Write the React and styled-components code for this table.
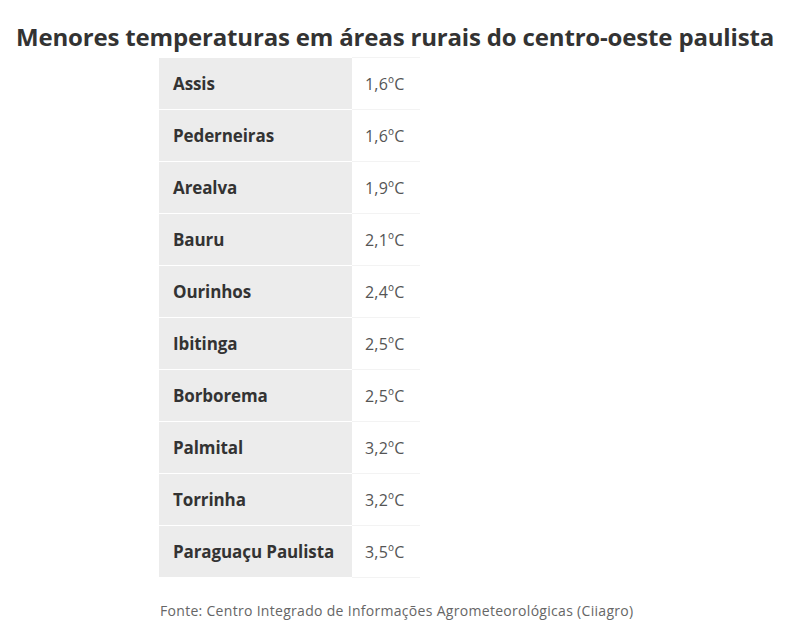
import React from "react";
import styled, { createGlobalStyle } from "styled-components";

const Global = createGlobalStyle`
  html, body { margin: 0; padding: 0; background: #fff; }
  body { font-family: "Open Sans", "Liberation Sans", sans-serif; }
`;

const Page = styled.div`
  width: 800px;
  height: 634px;
  box-sizing: border-box;
  padding-top: 20px;
  display: flex;
  flex-direction: column;
`;

const Title = styled.h2`
  margin: 0;
  text-align: center;
  padding-right: 10px;
  font-family: "Open Sans", sans-serif;
  font-weight: 700;
  font-size: 24px;
  line-height: 34px;
  letter-spacing: -0.17px;
  color: #333;
  white-space: nowrap;
`;

const Table = styled.table`
  margin-left: 159px;
  margin-top: 3px;
  width: 261px;
  table-layout: fixed;
  border-collapse: collapse;
  font-family: "Open Sans", sans-serif;
`;

const Row = styled.tr`
  height: 52px;
`;

const Name = styled.td`
  width: 193px;
  box-sizing: border-box;
  padding: 0 14px;
  background: #ececec;
  border-top: 1px solid #fff;
  border-bottom: 1px solid #fff;
  font-weight: 700;
  font-size: 17px;
  letter-spacing: -0.1px;
  color: #333;
  white-space: nowrap;
`;

const Value = styled.td`
  width: 68px;
  box-sizing: border-box;
  padding: 0 13px;
  border-top: 1px solid #f3f3f3;
  border-bottom: 1px solid #f3f3f3;
  font-size: 16px;
  letter-spacing: 0.2px;
  color: #555;
  white-space: nowrap;
`;

const Source = styled.p`
  margin: 23px 0 0 160px;
  font-family: "Open Sans", sans-serif;
  font-size: 14px;
  letter-spacing: 0.3px;
  color: #666;
`;

const data = [
  ["Assis", "1,6ºC"],
  ["Pederneiras", "1,6ºC"],
  ["Arealva", "1,9ºC"],
  ["Bauru", "2,1ºC"],
  ["Ourinhos", "2,4ºC"],
  ["Ibitinga", "2,5ºC"],
  ["Borborema", "2,5ºC"],
  ["Palmital", "3,2ºC"],
  ["Torrinha", "3,2ºC"],
  ["Paraguaçu Paulista", "3,5ºC"],
];

export default function App() {
  return (
    <Page>
      <Global />
      <Title>Menores temperaturas em áreas rurais do centro-oeste paulista</Title>
      <Table>
        <tbody>
          {data.map(([city, temp]) => (
            <Row key={city}>
              <Name>{city}</Name>
              <Value>{temp}</Value>
            </Row>
          ))}
        </tbody>
      </Table>
      <Source>Fonte: Centro Integrado de Informações Agrometeorológicas (Ciiagro)</Source>
    </Page>
  );
}
